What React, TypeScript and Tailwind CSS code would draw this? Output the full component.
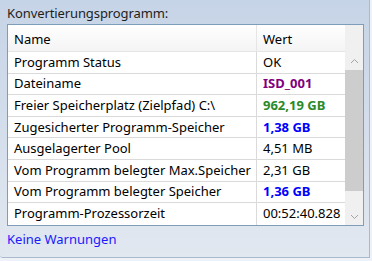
const rows: { name: string; value: string; cls?: string }[] = [
  { name: "Programm Status", value: "OK" },
  { name: "Dateiname", value: "ISD_001", cls: "font-bold text-[#800080]" },
  { name: "Freier Speicherplatz (Zielpfad) C:\\", value: "962,19 GB", cls: "font-bold text-[#2a8a2a]" },
  { name: "Zugesicherter Programm-Speicher", value: "1,38 GB", cls: "font-bold text-[#0000ff]" },
  { name: "Ausgelagerter Pool", value: "4,51 MB" },
  { name: "Vom Programm belegter Max.Speicher", value: "2,31 GB" },
  { name: "Vom Programm belegter Speicher", value: "1,36 GB", cls: "font-bold text-[#0000ff]" },
  { name: "Programm-Prozessorzeit", value: "00:52:40.828" },
];

const Chevron = ({ up }: { up?: boolean }) => (
  <svg width="9" height="6" viewBox="0 0 9 6">
    <polyline
      points={up ? "1,5 4.5,1.5 8,5" : "1,1 4.5,4.5 8,1"}
      fill="none"
      stroke="#a3a3a3"
      strokeWidth="1"
    />
  </svg>
);

export default function App() {
  return (
    <div className="w-[372px] h-[261px] bg-[#eef1f5] font-['Noto_Sans','Open_Sans',sans-serif] text-[13px] leading-none text-black">
      <div className="w-[370px] h-[258px] bg-gradient-to-b from-[#c6d4e7] to-[#e2e8f0] border-r border-b border-[#a9b9cf] rounded-bl-[3px] pl-[7px] pt-[2px]">
        <div className="h-[22px] flex items-center text-[#1e1e1e] tracking-[-0.1px]">
          Konvertierungsprogramm:
        </div>
        <div className="w-[357px] h-[202px] border border-[#7f9db9] bg-white flex">
          <div className="w-[337px] flex flex-col">
            <div className="h-[27px] flex border-b border-[#e5e5e5] bg-gradient-to-b from-white to-[#f4f4f4]">
              <div className="w-[249px] border-r border-[#e5e5e5] pl-[6px] flex items-center pt-[3px]">Name</div>
              <div className="flex-1 pl-[6px] flex items-center pt-[3px]">Wert</div>
            </div>
            {rows.map((r) => (
              <div key={r.name} className="h-[21.6px] flex border-b border-[#dadada] last:border-b-0">
                <div className="w-[249px] border-r border-[#dadada] pl-[6px] flex items-center whitespace-nowrap overflow-hidden">
                  {r.name}
                </div>
                <div className={`flex-1 pl-[6px] flex items-center whitespace-nowrap overflow-hidden ${r.cls ?? ""}`}>
                  {r.value}
                </div>
              </div>
            ))}
          </div>
          <div className="w-[18px] bg-[#f0f0f0] flex flex-col">
            <div className="h-[27px]" />
            <div className="h-[18px] flex items-center justify-center"><Chevron up /></div>
            <div className="h-[121px] bg-[#cdcdcd]" />
            <div className="flex-1" />
            <div className="h-[17px] flex items-center justify-center"><Chevron /></div>
          </div>
        </div>
        <div className="mt-[7px] text-[#1a1aff]">Keine Warnungen</div>
      </div>
    </div>
  );
}
